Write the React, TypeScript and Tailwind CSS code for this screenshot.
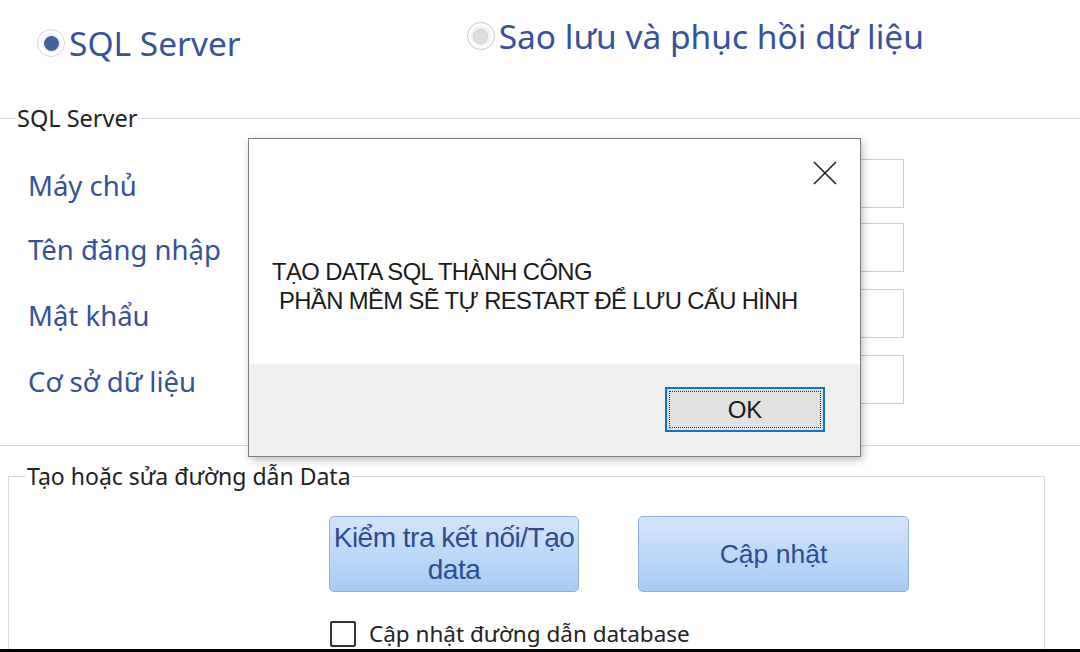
import React from "react";

function RadioOn() {
  return (
    <span className="flex h-[28px] w-[28px] items-center justify-center rounded-full border border-[#d3d7de] bg-[#f4f5f7] shadow-[inset_0_0_0_3px_#ffffff]">
      <span className="h-[15px] w-[15px] rounded-full bg-[#46619f]" />
    </span>
  );
}

function RadioOff() {
  return (
    <span className="flex h-[28px] w-[28px] items-center justify-center rounded-full border border-[#c9c9c9] bg-[#f2f2f2] shadow-[inset_0_0_0_3px_#ffffff]">
      <span className="h-[15px] w-[15px] rounded-full border border-[#cfcfcf] bg-[#dedede]" />
    </span>
  );
}

function FieldRow({ label, mt }: { label: string; mt: string }) {
  return (
    <div className={`flex h-[49px] items-center ${mt}`}>
      <span className="ml-[28px] mt-[5px] w-[232px] text-[27.5px] leading-none text-[#35519a]">{label}</span>
      <div className="h-[49px] w-[644px] border border-[#c3cddd] bg-white" />
    </div>
  );
}

export default function App() {
  return (
    <div className="relative h-[652px] w-[1080px] overflow-hidden border-b-[3px] border-black bg-white font-['Noto_Sans',sans-serif]">
      {/* top radios */}
      <div className="flex h-[106px] items-start">
        <div className="ml-[37px] mt-[23px] flex items-center gap-[4px]">
          <RadioOn />
          <span className="text-[33.5px] leading-[40px] text-[#36529a]">SQL Server</span>
        </div>
        <div className="ml-[226px] mt-[16px] flex items-center gap-[4px]">
          <RadioOff />
          <span className="text-[33.5px] leading-[40px] text-[#36529a]">Sao lưu và phục hồi dữ liệu</span>
        </div>
      </div>

      {/* group 1 */}
      <fieldset className="h-[340px] border-y border-[#dadada]">
        <legend className="ml-[16px] px-[1px] text-[23.5px] leading-[24px] text-[#222]">SQL Server</legend>
        <div className="flex flex-col pt-[29px]">
          <FieldRow label="Máy chủ" mt="mt-0" />
          <FieldRow label="Tên đăng nhập" mt="mt-[15px]" />
          <FieldRow label="Mật khẩu" mt="mt-[17px]" />
          <FieldRow label="Cơ sở dữ liệu" mt="mt-[17px]" />
        </div>
      </fieldset>

      {/* group 2 */}
      <fieldset className="mx-[8px] mt-[18px] h-[260px] w-[1037px] border border-[#dadada]">
        <legend className="ml-[17px] px-[1px] text-[23px] leading-[24px] text-[#222]">Tạo hoặc sửa đường dẫn Data</legend>
        <div className="flex gap-[59px] pl-[320px] pt-[28px]">
          <button className="flex h-[76px] w-[250px] flex-col items-center justify-center rounded-[5px] border border-[#8eb1dc] bg-gradient-to-b from-[#d3e5fb] to-[#a9cbf3] font-['Liberation_Sans',sans-serif] text-[28px] leading-[32.5px] tracking-[-0.5px] text-[#2d4d8f]">
            <span>Kiểm tra kết nối/Tạo</span>
            <span>data</span>
          </button>
          <button className="flex h-[76px] w-[271px] items-center justify-center rounded-[5px] border border-[#8eb1dc] bg-gradient-to-b from-[#d3e5fb] to-[#a9cbf3] font-['Liberation_Sans',sans-serif] text-[26.5px] leading-[30px] text-[#2d4d8f]">
            Cập nhật
          </button>
        </div>
        <div className="mt-[29px] flex items-center gap-[13px] pl-[321px]">
          <span className="h-[26px] w-[26px] rounded-[2px] border-2 border-[#333] bg-white" />
          <span className="text-[22.5px] leading-[26px] text-[#222]">Cập nhật đường dẫn database</span>
        </div>
      </fieldset>

      {/* message box */}
      <div className="absolute left-[248px] top-[138px] flex h-[319px] w-[613px] flex-col border border-[#7d7d7d] bg-white shadow-[2px_3px_8px_rgba(0,0,0,0.25)]">
        <div className="relative h-[225px] bg-white">
          <svg className="absolute left-[564px] top-[22px]" width="24" height="24" viewBox="0 0 24 24">
            <path d="M1 1 L23 23 M23 1 L1 23" stroke="#222" strokeWidth="1.6" fill="none" />
          </svg>
          <div className="pl-[23px] pt-[118px] font-['Liberation_Sans',sans-serif] text-[23.8px] leading-[29px] tracking-[-0.6px] text-[#1a1a1a]">
            <div>TẠO DATA SQL THÀNH CÔNG</div>
            <div className="pl-[7px]">PHẦN MỀM SẼ TỰ RESTART ĐỂ LƯU CẤU HÌNH</div>
          </div>
        </div>
        <div className="flex flex-1 items-start justify-end bg-[#f0f0f0] pr-[35px] pt-[23px]">
          <button className="flex h-[45px] w-[160px] items-center justify-center border-2 border-[#0a74d6] bg-[#e1e1e1] p-[2px]">
            <span className="flex h-full w-full items-center justify-center border border-dotted border-[#333] font-['Liberation_Sans',sans-serif] text-[24px] text-[#1a1a1a]">
              OK
            </span>
          </button>
        </div>
      </div>
    </div>
  );
}
